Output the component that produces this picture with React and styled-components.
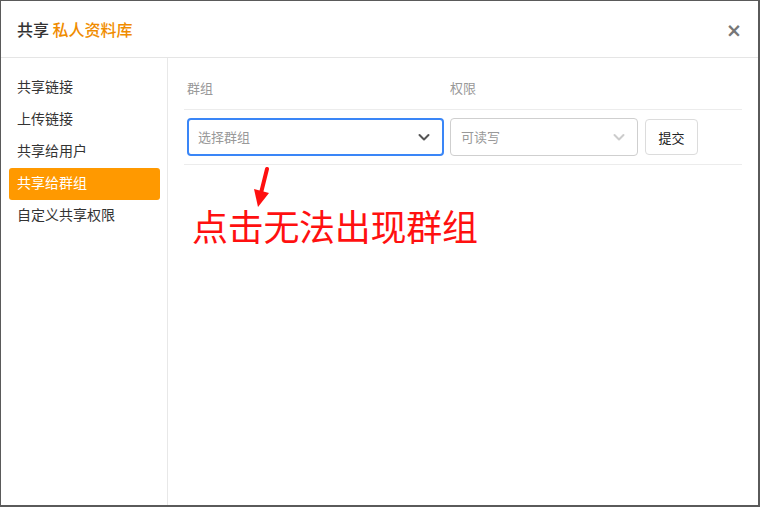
import React from "react";
import styled, { createGlobalStyle } from "styled-components";

const GlobalStyle = createGlobalStyle`
  html, body { margin: 0; padding: 0; background: #fff; }
  body { font-family: "Noto Sans CJK SC", "Noto Sans", sans-serif; }
  * { box-sizing: border-box; }
`;

const Modal = styled.div`
  width: 760px;
  height: 507px;
  border: 1px solid #5a5a5a;
  border-right-width: 2px;
  border-bottom-width: 2px;
  display: flex;
  flex-direction: column;
  background: #fff;
`;

const Header = styled.div`
  height: 57px;
  flex-shrink: 0;
  border-bottom: 1px solid #e5e5e5;
  display: flex;
  align-items: center;
  justify-content: space-between;
  padding: 0 16px 0 16px;
`;

const Title = styled.div`
  font-size: 16px;
  font-weight: 500;
  color: #333;
  span { color: #f08c00; }
`;

const Close = styled.div`
  color: #777;
  font-size: 19px;
  font-weight: bold;
  line-height: 1;
  font-family: "DejaVu Sans", sans-serif;
  padding-top: 2px;
`;

const Body = styled.div`
  flex: 1;
  display: flex;
`;

const Sidebar = styled.div`
  width: 167px;
  border-right: 1px solid #e8e8e8;
  padding-top: 14px;
  display: flex;
  flex-direction: column;
`;

const NavItem = styled.div`
  margin-left: 8px;
  width: 151px;
  height: 32px;
  line-height: 29px;
  padding-left: 8px;
  font-size: 14px;
  border-radius: 3px;
  color: ${(p) => (p.active ? "#fff" : "#333")};
  background: ${(p) => (p.active ? "#ff9900" : "transparent")};
`;

const Content = styled.div`
  flex: 1;
  padding: 0 16px;
`;

const Row = styled.div`
  display: grid;
  grid-template-columns: 263px 194px 1fr;
  border-bottom: 1px solid #ececec;
  align-items: center;
  padding: ${(p) => (p.head ? "19px 0 8px" : "8px 0 8px")};
`;

const Cell = styled.div`
  padding: 0 3px;
`;

const Label = styled.div`
  font-size: 13px;
  color: #999;
  line-height: 22px;
  padding-bottom: 2px;
`;

const Select = styled.div`
  height: 38px;
  border: ${(p) => (p.focused ? "2px solid #3a86f7" : "1px solid #cfcfcf")};
  border-radius: 4px;
  display: flex;
  align-items: center;
  justify-content: space-between;
  padding: 0 ${(p) => (p.focused ? "11px 1px 9px" : "11px 1px 10px")};
  font-size: 13px;
  color: #999;
`;

const Button = styled.div`
  width: 53px;
  height: 36px;
  margin-left: 1px;
  border: 1px solid #dcdcdc;
  border-radius: 4px;
  display: flex;
  align-items: center;
  justify-content: center;
  font-size: 13px;
  color: #222;
`;

const Note = styled.div`
  padding-left: 8px;
  margin-top: 2px;
`;

const Arrow = styled.svg`
  display: block;
  margin-left: 56px;
`;

const NoteText = styled.div`
  margin-top: -4px;
  font-size: 36px;
  line-height: 40px;
  color: #ff1010;
  letter-spacing: -0.3px;
`;

const Chevron = ({ color }) => (
  <svg width="14" height="14" viewBox="0 0 14 14">
    <path d="M2.5 5 L7 9.5 L11.5 5" fill="none" stroke={color} strokeWidth="2" strokeLinecap="round" strokeLinejoin="round" />
  </svg>
);

const items = ["共享链接", "上传链接", "共享给用户", "共享给群组", "自定义共享权限"];

export default function App() {
  return (
    <>
      <GlobalStyle />
      <Modal>
        <Header>
          <Title>
            共享 <span>私人资料库</span>
          </Title>
          <Close>×</Close>
        </Header>
        <Body>
          <Sidebar>
            {items.map((t, i) => (
              <NavItem key={t} active={i === 3}>
                {t}
              </NavItem>
            ))}
          </Sidebar>
          <Content>
            <Row head>
              <Cell><Label>群组</Label></Cell>
              <Cell><Label>权限</Label></Cell>
              <Cell />
            </Row>
            <Row>
              <Cell>
                <Select focused>
                  选择群组
                  <Chevron color="#555" />
                </Select>
              </Cell>
              <Cell>
                <Select>
                  可读写
                  <Chevron color="#ccc" />
                </Select>
              </Cell>
              <Cell>
                <Button>提交</Button>
              </Cell>
            </Row>
            <Note>
              <Arrow width="26" height="42" viewBox="0 0 26 42">
                <path d="M19 2 L13 26" stroke="#ff1010" strokeWidth="4" strokeLinecap="round" />
                <path d="M6 22 L10 40 L21 26 Z" fill="#ff1010" />
              </Arrow>
              <NoteText>点击无法出现群组</NoteText>
            </Note>
          </Content>
        </Body>
      </Modal>
    </>
  );
}
